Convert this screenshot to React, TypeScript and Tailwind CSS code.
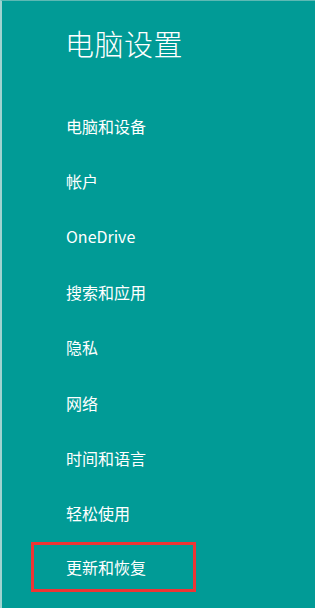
import React from 'react';

const items = ['电脑和设备', '帐户', 'OneDrive', '搜索和应用', '隐私', '网络', '时间和语言', '轻松使用'];

const font = { fontFamily: '"Noto Sans CJK SC", "Noto Sans", sans-serif' };

export default function App() {
  return (
    <div
      className="w-[315px] h-[608px] bg-[#019b96] border-l-2 border-l-[#9fd3d0] border-t border-t-[#5cb9b4] text-white overflow-hidden"
      style={font}
    >
      <div className="h-[97px] pl-[63px] pt-[24px]">
        <h1 className="text-[29px] leading-[36px] font-light tracking-[0.5px]">电脑设置</h1>
      </div>
      <ul className="pl-[64px]">
        {items.map((item) => (
          <li key={item} className="h-[55.4px] flex items-center text-[16px] leading-none">
            {item}
          </li>
        ))}
        <li className="h-[55.4px] flex items-start text-[16px] leading-none">
          <div className="mt-[1px] -ml-[35px] w-[165px] h-[50px] border-[3px] border-[#ef3434] pl-[32px] flex items-center">
            更新和恢复
          </div>
        </li>
      </ul>
    </div>
  );
}
